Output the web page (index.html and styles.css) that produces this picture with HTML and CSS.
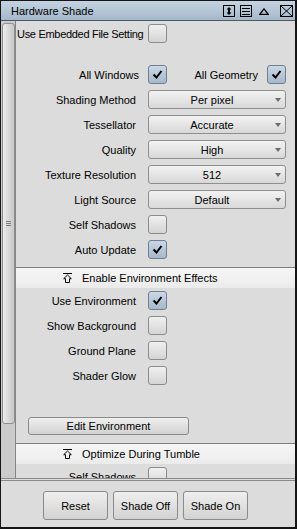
FILE: index.html
```html
<!DOCTYPE html>
<html lang="en">
<head>
    <meta charset="UTF-8">
    <meta name="viewport" content="width=device-width, initial-scale=1.0">
    <title>Hardware Shade</title>
    <link rel="stylesheet" href="styles.css">
</head>
<body>
    <div class="panel">
        <div class="titlebar">
            <span class="title">Hardware Shade</span>
            <svg class="ticon" width="12" height="12" viewBox="0 0 12 12">
                <rect x="0.5" y="0.5" width="11" height="11" fill="none" stroke="#000"/>
                <path d="M6 2 L8.5 4.5 H3.5 Z M6 10 L8.5 7.5 H3.5 Z" fill="#000"/>
                <rect x="5" y="4" width="2" height="4" fill="#000"/>
            </svg>
            <svg class="ticon" width="12" height="12" viewBox="0 0 12 12">
                <rect x="0.5" y="0.5" width="11" height="11" fill="none" stroke="#000"/>
                <path d="M2 3.5 H10 M2 6.5 H10 M2 9.5 H10" stroke="#000"/>
            </svg>
            <svg class="ticon tri" width="10" height="7" viewBox="0 0 10 7">
                <path d="M5 0.8 L9.2 6.3 H0.8 Z" fill="none" stroke="#000" stroke-width="1.2"/>
            </svg>
            <svg class="ticon" width="13" height="12" viewBox="0 0 13 12">
                <rect x="0.5" y="0.5" width="12" height="11" fill="none" stroke="#000"/>
                <path d="M1 1 L12 11 M12 1 L1 11" stroke="#000"/>
            </svg>
        </div>

        <div class="main">
            <div class="scrollbar">
                <div class="thumb">
                    <svg width="5" height="6" viewBox="0 0 5 6">
                        <path d="M0 0.5 H5 M0 2.5 H5 M0 4.5 H5" stroke="#7c7c7c"/>
                    </svg>
                </div>
            </div>

            <div class="content">
                <div class="row first">
                    <span class="lbl-left">Use Embedded File Setting</span>
                    <span class="check"></span>
                </div>

                <div class="row pair">
                    <div class="group one">
                        <span>All Windows</span>
                        <span class="check on"><svg width="17" height="17" viewBox="0 0 17 17"><path d="M4.5 8.5 L7.5 11.5 L12.5 5" fill="none" stroke="#000" stroke-width="2"/></svg></span>
                    </div>
                    <div class="group two">
                        <span>All Geometry</span>
                        <span class="check on"><svg width="17" height="17" viewBox="0 0 17 17"><path d="M4.5 8.5 L7.5 11.5 L12.5 5" fill="none" stroke="#000" stroke-width="2"/></svg></span>
                    </div>
                </div>

                <div class="row">
                    <span class="lbl">Shading Method</span>
                    <div class="select"><span class="val">Per pixel</span><span class="arrow"></span></div>
                </div>
                <div class="row">
                    <span class="lbl">Tessellator</span>
                    <div class="select"><span class="val">Accurate</span><span class="arrow"></span></div>
                </div>
                <div class="row">
                    <span class="lbl">Quality</span>
                    <div class="select"><span class="val">High</span><span class="arrow"></span></div>
                </div>
                <div class="row">
                    <span class="lbl">Texture Resolution</span>
                    <div class="select"><span class="val">512</span><span class="arrow"></span></div>
                </div>
                <div class="row">
                    <span class="lbl">Light Source</span>
                    <div class="select"><span class="val">Default</span><span class="arrow"></span></div>
                </div>
                <div class="row">
                    <span class="lbl">Self Shadows</span>
                    <span class="check"></span>
                </div>
                <div class="row">
                    <span class="lbl">Auto Update</span>
                    <span class="check on"><svg width="17" height="17" viewBox="0 0 17 17"><path d="M4.5 8.5 L7.5 11.5 L12.5 5" fill="none" stroke="#000" stroke-width="2"/></svg></span>
                </div>

                <div class="section env">
                    <svg width="9" height="10" viewBox="0 0 9 10"><path d="M0 0.5 H9 M4.5 2 L0.7 5.7 H2.5 V9.5 H6.5 V5.7 H8.3 Z" fill="none" stroke="#000"/></svg>
                    <span>Enable Environment Effects</span>
                </div>

                <div class="row">
                    <span class="lbl">Use Environment</span>
                    <span class="check on"><svg width="17" height="17" viewBox="0 0 17 17"><path d="M4.5 8.5 L7.5 11.5 L12.5 5" fill="none" stroke="#000" stroke-width="2"/></svg></span>
                </div>
                <div class="row">
                    <span class="lbl">Show Background</span>
                    <span class="check"></span>
                </div>
                <div class="row">
                    <span class="lbl">Ground Plane</span>
                    <span class="check"></span>
                </div>
                <div class="row">
                    <span class="lbl">Shader Glow</span>
                    <span class="check"></span>
                </div>

                <button class="btn wide">Edit Environment</button>

                <div class="section tumble">
                    <svg width="9" height="10" viewBox="0 0 9 10"><path d="M0 0.5 H9 M4.5 2 L0.7 5.7 H2.5 V9.5 H6.5 V5.7 H8.3 Z" fill="none" stroke="#000"/></svg>
                    <span>Optimize During Tumble</span>
                </div>

                <div class="row">
                    <span class="lbl">Self Shadows</span>
                    <span class="check"></span>
                </div>
            </div>
        </div>

        <div class="buttons">
            <button class="btn">Reset</button>
            <button class="btn">Shade Off</button>
            <button class="btn">Shade On</button>
        </div>
    </div>
</body>
</html>
```

FILE: styles.css
```css
* {
    box-sizing: border-box;
}
body {
    margin: 0;
    font-family: "Liberation Sans", Arial, sans-serif;
    font-size: 11px;
    color: #000;
    background-color: #dcdcdc;
}
.panel {
    width: 297px;
    height: 529px;
    border: 1px solid #151515;
    border-right-width: 2px;
    border-bottom-width: 2px;
    background: #dcdcdc;
    display: flex;
    flex-direction: column;
}
.titlebar {
    height: 20px;
    flex: none;
    display: flex;
    align-items: center;
    padding: 1px 2px 0 10px;
    border-bottom: 1px solid #4d5b69;
    background: linear-gradient(#c4d3e1, #a5b8cb);
}
.title {
    flex: 1;
}
.ticon {
    display: block;
    margin-left: 5px;
}
.ticon.tri {
    margin-left: 7px;
    margin-right: 6px;
}
.main {
    height: 457px;
    flex: none;
    display: flex;
}
.scrollbar {
    width: 15px;
    flex: none;
    padding: 2px 0 0 1px;
    background: #cbcbcb;
    border-right: 1px solid #858585;
}
.thumb {
    width: 13px;
    height: 401px;
    border: 1px solid #8e8e8e;
    border-radius: 3px;
    background: linear-gradient(to right, #ececec, #d6d6d6 55%, #c8c8c8);
    display: flex;
    align-items: center;
    justify-content: center;
}
.content {
    flex: 1;
    overflow: hidden;
}
.row {
    height: 25px;
    display: flex;
    align-items: center;
}
.row.first {
    margin-bottom: 16px;
}
.lbl-left {
    width: 132px;
    flex: none;
    padding-left: 1px;
    white-space: nowrap;
    letter-spacing: -0.3px;
}
.lbl {
    width: 120px;
    margin-right: 12px;
    text-align: right;
    white-space: nowrap;
}
.group {
    display: flex;
    align-items: center;
    justify-content: flex-end;
    gap: 9px;
}
.group.one {
    width: 151px;
}
.group.two {
    width: 119px;
}
.check {
    width: 19px;
    height: 19px;
    flex: none;
    border: 1px solid #8c8c8c;
    border-radius: 3px;
    background: linear-gradient(#f0f0f0, #d4d4d4);
}
.check.on {
    border-color: #6f7f8f;
    background: linear-gradient(#cad8e6, #a6b8cb);
}
.check svg {
    display: block;
}
.select {
    width: 138px;
    height: 19px;
    display: flex;
    align-items: center;
    border: 1px solid #8f8f8f;
    border-radius: 3px;
    background: linear-gradient(#f2f2f2, #d8d8d8);
}
.val {
    flex: 1;
    text-align: center;
    padding-left: 6px;
}
.arrow {
    width: 0;
    height: 0;
    margin: 0 4px 0 6px;
    border-left: 3.5px solid transparent;
    border-right: 3.5px solid transparent;
    border-top: 4px solid #6c6c6c;
}
.section {
    height: 21px;
    display: flex;
    align-items: center;
    gap: 10px;
    padding-left: 47px;
    border-top: 1px solid #7e7e7e;
    background: linear-gradient(#f6f6f6, #ebebeb);
}
.section svg {
    display: block;
}
.section.env {
    margin-top: 5px;
}
.btn {
    height: 29px;
    width: 65px;
    padding: 0;
    font-family: "Liberation Sans", Arial, sans-serif;
    font-size: 11px;
    color: #000;
    border: 1px solid #8a8a8a;
    border-radius: 3px;
    background: linear-gradient(#efefef, #d2d2d2);
}
.btn.wide {
    display: block;
    width: 161px;
    height: 18px;
    margin: 29px 0 8px 12px;
}
.buttons {
    flex: 1;
    display: flex;
    gap: 5px;
    padding: 10px 0 0 42px;
    border-top: 3px double #8a8a8a;
}
```
